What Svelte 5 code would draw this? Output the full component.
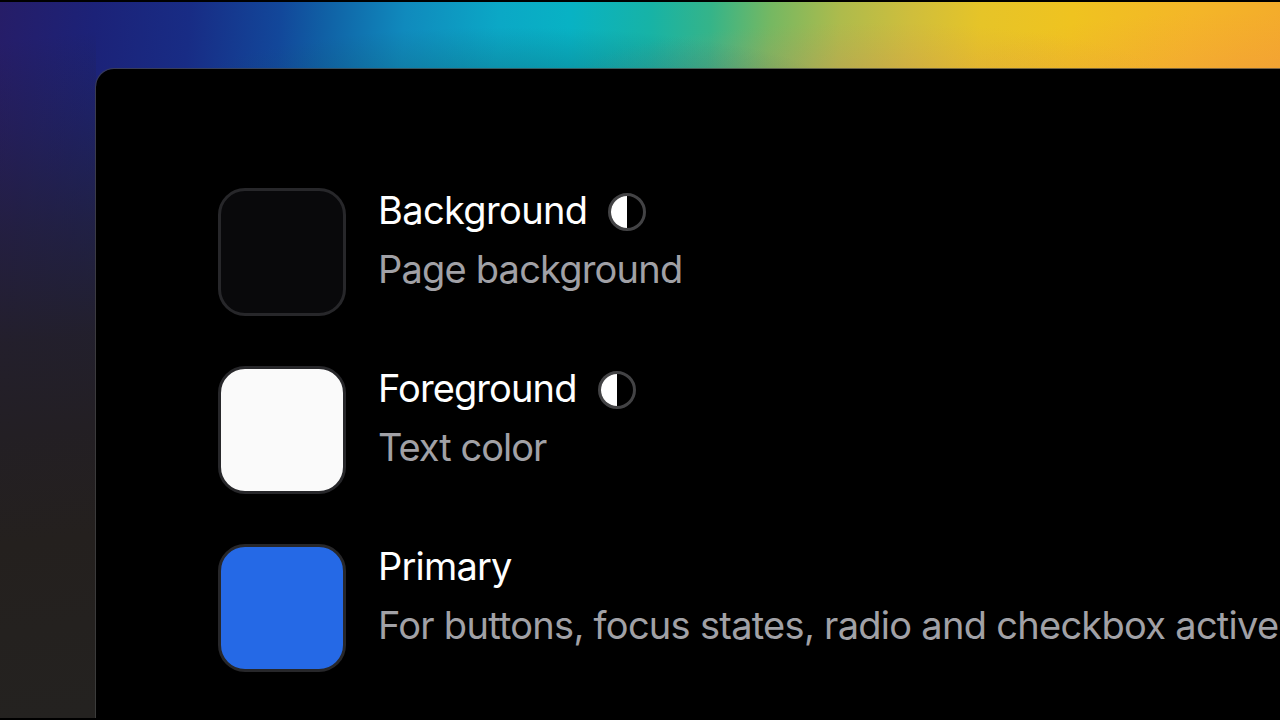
<script lang="ts">
  type Swatch = {
    name: string;
    nameSpacing: number;
    description: string;
    descriptionSpacing: number;
    color: string;
    contrast: boolean;
  };

  const swatches: Swatch[] = [
    {
      name: 'Background',
      nameSpacing: -0.64,
      description: 'Page background',
      descriptionSpacing: -0.8,
      color: '#09090b',
      contrast: true
    },
    {
      name: 'Foreground',
      nameSpacing: -0.9,
      description: 'Text color',
      descriptionSpacing: -1,
      color: '#fafafa',
      contrast: true
    },
    {
      name: 'Primary',
      nameSpacing: -0.8,
      description: 'For buttons, focus states, radio and checkbox active',
      descriptionSpacing: -0.72,
      color: '#2569e6',
      contrast: false
    }
  ];
</script>

<div class="stage">
  <main class="panel">
    {#each swatches as swatch}
      <section class="row">
        <div class="swatch" style="background-color: {swatch.color}"></div>
        <div class="info">
          <div class="title">
            <span style="letter-spacing: {swatch.nameSpacing}px">{swatch.name}</span>
            {#if swatch.contrast}
              <svg class="contrast" viewBox="0 0 38 38" aria-hidden="true">
                <circle cx="19" cy="19" r="17.5" fill="#000" stroke="#434345" stroke-width="3" />
                <path d="M19 3A16 16 0 0 0 19 35Z" fill="#fff" />
              </svg>
            {/if}
          </div>
          <p class="description" style="letter-spacing: {swatch.descriptionSpacing}px">{swatch.description}</p>
        </div>
      </section>
    {/each}
  </main>
</div>

<style>
  :global(body) {
    background: #000;
    overflow: hidden;
  }

  .stage {
    box-sizing: border-box;
    width: 1280px;
    height: 720px;
    padding: 66px 0 0 95px;
    overflow: hidden;
    border-top: 2px solid #000;
    border-bottom: 2px solid #000;
    font-family: Inter, "Liberation Sans", sans-serif;
    background:
      linear-gradient(173deg, rgba(35, 31, 45, 0) 40px, rgba(35, 31, 45, 0.3) 130px, rgba(35, 31, 42, 0.65) 230px, rgba(35, 31, 38, 0.92) 340px, #231f24 430px, #24201e 540px, #242220 716px) left / 96px 100% no-repeat,
      radial-gradient(ellipse 330px 65px at 510px 90px, rgba(15, 80, 95, 0.4), rgba(15, 80, 95, 0)),
      radial-gradient(ellipse 300px 60px at 870px 80px, rgba(210, 120, 90, 0.28), rgba(210, 120, 90, 0)),
      radial-gradient(ellipse 300px 70px at 1240px 80px, rgba(240, 130, 80, 0.28), rgba(240, 130, 80, 0)),
      linear-gradient(94deg, #261d68 0, #1c2278 95px, #182c85 190px, #12479a 280px, #1060a5 325px, #108abd 405px, #0ba8c6 500px, #08b2c4 570px, #17b3a6 650px, #35b489 710px, #75b862 770px, #aebb4c 840px, #cfbe3c 910px, #e6c428 980px, #efc320 1070px, #f4b628 1190px, #f4ac2b 1280px);
  }

  .panel {
    box-sizing: border-box;
    display: flex;
    flex-direction: column;
    gap: 50px;
    width: 1400px;
    height: 800px;
    padding: 119px 0 0 122px;
    border: 1px solid rgba(70, 70, 70, 0.7);
    border-radius: 19px;
    background: #000;
    background-clip: padding-box;
  }

  .row {
    display: flex;
    flex: none;
    gap: 32px;
    height: 128px;
  }

  .swatch {
    box-sizing: border-box;
    flex: none;
    width: 128px;
    height: 128px;
    border: 3px solid #27272a;
    border-radius: 27px;
  }

  .info {
    white-space: nowrap;
  }

  .title {
    display: flex;
    align-items: center;
    gap: 21px;
    height: 48px;
    color: #fff;
    font-size: 38px;
    line-height: 44px;
  }

  .title span {
    height: 48px;
  }

  .contrast {
    flex: none;
    width: 38px;
    height: 38px;
  }

  .description {
    margin: 9px 0 0;
    color: #a1a1a6;
    font-size: 38px;
    line-height: 48px;
  }
</style>
